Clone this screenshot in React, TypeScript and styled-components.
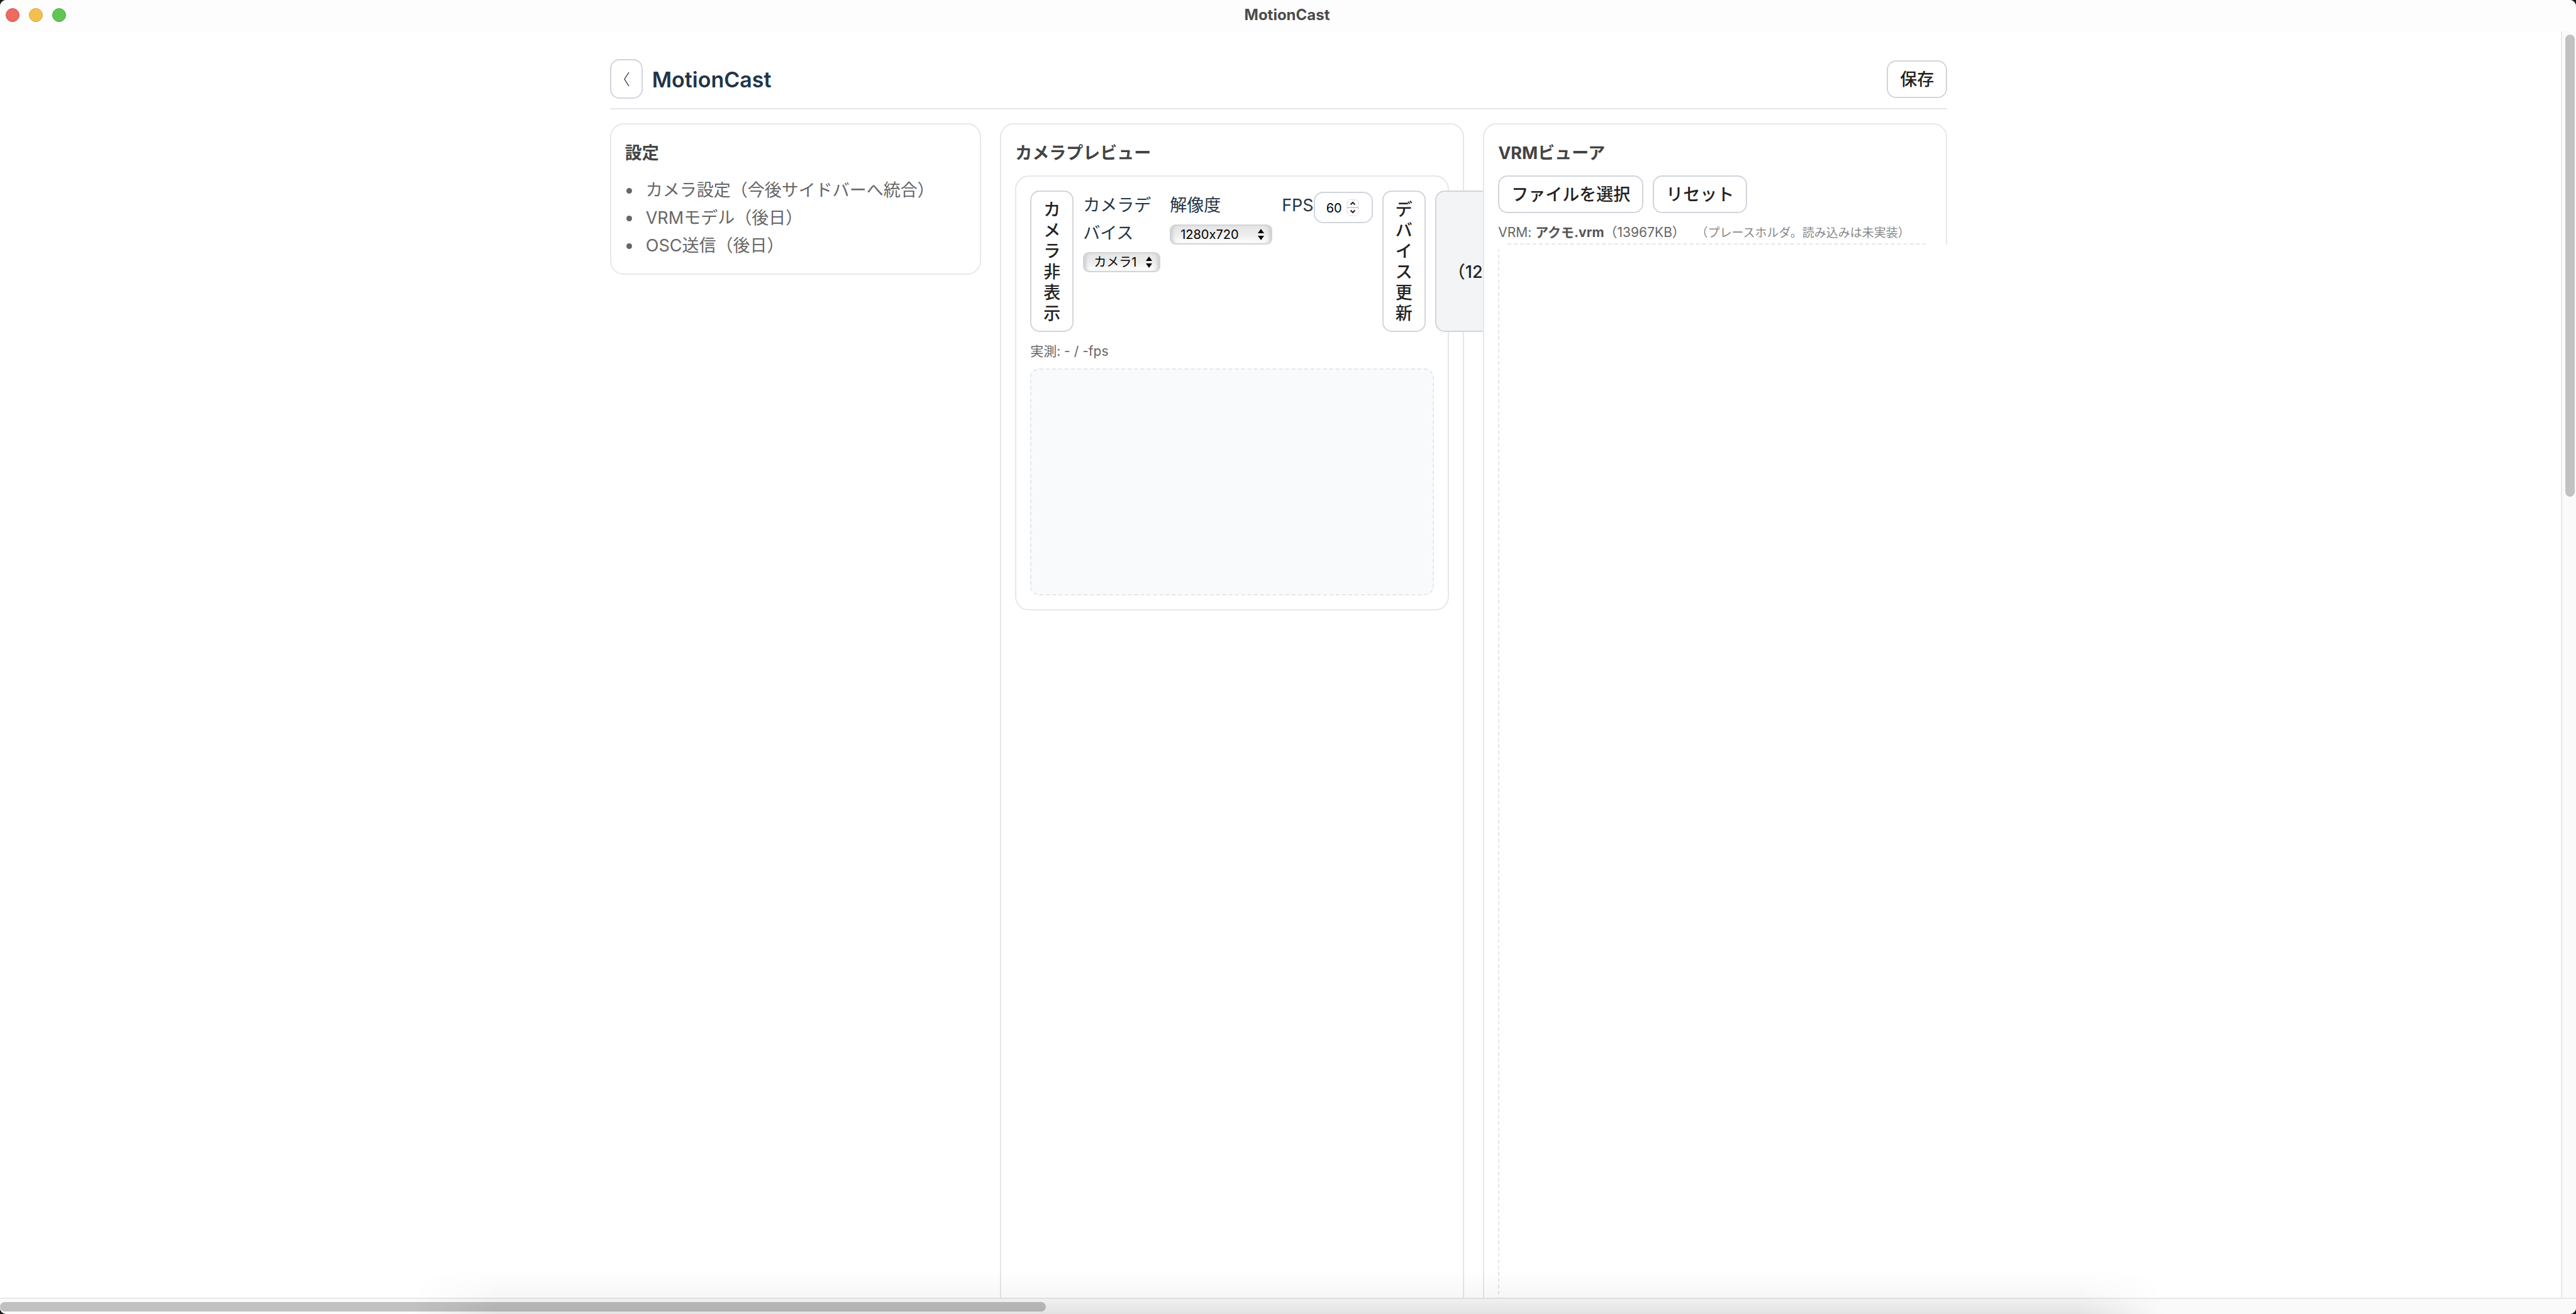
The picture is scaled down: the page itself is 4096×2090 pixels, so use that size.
import React from "react";
import styled, { createGlobalStyle } from "styled-components";

const GlobalStyle = createGlobalStyle`
  *, *::before, *::after { box-sizing: border-box; }
  body {
    margin: 0;
    background: #1b1b1b;
    color: #213547;
    font-family: Inter, "Noto Sans CJK JP", sans-serif;
    font-size: 27px;
    line-height: 44px;
    font-feature-settings: "calt" 0;
  }
  button, input, select {
    font-family: inherit;
    font-feature-settings: inherit;
    margin: 0;
  }
`;

const Window = styled.div`
  display: grid;
  grid-template-rows: 50px minmax(0, 1fr) 26px;
  grid-template-columns: minmax(0, 1fr) 24px;
  height: 100vh;
  overflow: hidden;
  background: #fff;
  border-radius: 10px;
  position: relative;
`;

const TitleBar = styled.header`
  grid-column: 1 / -1;
  display: grid;
  grid-template-columns: 1fr auto 1fr;
  align-items: center;
  padding: 0 12px 2px 9px;
  background: #fdfdfd;
`;

const Lights = styled.div`
  display: flex;
  gap: 15px;
`;

const Light = styled.button<{ $fill: string; $edge: string }>`
  width: 22px;
  height: 22px;
  padding: 0;
  border: 1px solid ${(p) => p.$edge};
  border-radius: 50%;
  background: ${(p) => p.$fill};
`;

const WindowTitle = styled.div`
  font-size: 24px;
  font-weight: 700;
  line-height: 28px;
  color: #4b4b4b;
`;

const Viewport = styled.div`
  overflow: hidden;
  padding-right: 6px;
`;

const Page = styled.main`
  width: 52.3%;
  margin: 0 auto;
  padding-top: 44px;
`;

const PageHeader = styled.div`
  display: flex;
  align-items: center;
  justify-content: space-between;
  padding-bottom: 15px;
  margin-bottom: 22px;
  border-bottom: 2px solid #e5e7eb;
`;

const Brand = styled.div`
  display: flex;
  align-items: center;
  gap: 15px;
`;

const BrandName = styled.h1`
  margin: 0;
  padding-top: 2px;
  font-size: 34px;
  font-weight: 600;
`;

const Button = styled.button<{ $muted?: boolean }>`
  padding: 12px 19px 11px;
  border: 2px solid #d1d5db;
  border-radius: 15px;
  background: ${(p) => (p.$muted ? "#f3f4f6" : "#fff")};
  color: #222;
  font-size: 27px;
  font-weight: 500;
  line-height: 33px;
`;

const BackButton = styled(Button)`
  display: grid;
  place-items: center;
  width: 52px;
  height: 63px;
  padding: 0;
`;

const Columns = styled.div`
  display: grid;
  grid-template-columns: minmax(0, 4fr) minmax(0, 5fr) minmax(0, 5fr);
  gap: 30px;
`;

const Card = styled.section<{ $fit?: boolean }>`
  align-self: ${(p) => (p.$fit ? "start" : "stretch")};
  min-width: 0;
  padding: 22px;
  border: 2px solid #e5e7eb;
  border-radius: 22px;
  background: #fff;
`;

const FrontCard = styled(Card)`
  position: relative;
  z-index: 1;
`;

const CardTitle = styled.h2`
  margin: 0 0 13px;
  padding-top: 2px;
  font-size: 27px;
  font-weight: 700;
  color: #444;
`;

const TodoList = styled.ul`
  margin: 0;
  padding: 2px 0 0;
  list-style: none;
  color: #666;

  li {
    display: flex;
    align-items: center;
  }

  li::before {
    content: "";
    width: 9px;
    height: 9px;
    margin: 0 22px 0 2px;
    border-radius: 50%;
    background: #666;
  }
`;

const Controls = styled.div`
  display: flex;
  gap: 15px;
`;

const Field = styled.label<{ $inline?: boolean }>`
  display: flex;
  flex-direction: ${(p) => (p.$inline ? "row" : "column")};
  align-items: flex-start;
  padding-top: 2px;
`;

const SelectBox = styled.span`
  position: relative;
  display: block;
  margin-top: 8px;
  height: 32px;

  svg {
    position: absolute;
    right: 13px;
    top: 6px;
    pointer-events: none;
  }
`;

const Select = styled.select<{ $room: number }>`
  appearance: none;
  display: block;
  height: 32px;
  padding: 0 ${(p) => p.$room}px 0 15px;
  border: 2px solid #d1d5db;
  border-radius: 9px;
  background: linear-gradient(#e6e6e6, #ededed 50%, #fff);
  box-shadow: inset 6px 0 6px -4px #c4c4c4, inset -6px 0 6px -4px #c4c4c4;
  color: #000;
  font-size: 20px;
  line-height: 28px;
`;

const NumberBox = styled.span`
  position: relative;
  display: block;

  svg {
    position: absolute;
    right: 22px;
    top: 11px;
    pointer-events: none;
  }
`;

const NumberInput = styled.input`
  appearance: textfield;
  display: block;
  width: 94px;
  height: 50px;
  padding: 1px 18px 0;
  border: 2px solid #d1d5db;
  border-radius: 15px;
  background: #fff;
  color: #000;
  font-size: 20px;

  &::-webkit-inner-spin-button { appearance: none; margin: 0; }
`;

const Status = styled.div`
  margin-top: 14px;
  font-size: 21px;
  line-height: 33px;
  color: #666;
  white-space: nowrap;
`;

const FileName = styled.strong`
  font-weight: 700;
  color: #555;
`;

const Note = styled.span`
  margin-left: 26px;
  font-size: 19px;
  color: #888;
`;

const Preview = styled.div`
  margin-top: 11px;
  aspect-ratio: 16 / 9;
  border: 2px dashed #e5e7eb;
  border-radius: 15px;
  background: #f9fafc;
`;

const Stage = styled.div`
  border: 2px dashed #e5e7eb;
  border-radius: 15px;
`;

const StageCanvas = styled.canvas`
  display: block;
  width: calc(100% + 40px);
  height: 100vh;
  background: #fff;
`;

const Track = styled.div<{ $axis: "x" | "y" }>`
  background: #fafafa;
  border: 0 solid #e8e8e8;
  border-width: ${(p) => (p.$axis === "x" ? "2px 0 0 0" : "0 0 0 2px")};
  padding: ${(p) => (p.$axis === "x" ? "5px 0 0 0" : "5px 0 0 5px")};
  grid-column: ${(p) => (p.$axis === "x" ? "1 / -1" : "auto")};
`;

const Thumb = styled.div<{ $axis: "x" | "y" }>`
  width: ${(p) => (p.$axis === "x" ? "40.6%" : "15px")};
  height: ${(p) => (p.$axis === "x" ? "15px" : "36.6%")};
  border-radius: 8px;
  background: #c1c1c1;
`;

const DockShadow = styled.div`
  position: absolute;
  z-index: 2;
  left: 16%;
  right: 16%;
  bottom: 0;
  height: 70px;
  pointer-events: none;
  background: linear-gradient(transparent, rgba(0, 0, 0, 0.03) 60%, rgba(0, 0, 0, 0.09));
  mask-image: linear-gradient(90deg, transparent, #000 5%, #000 95%, transparent);
`;

const SelectArrows = () => (
  <svg width="10" height="20" viewBox="0 0 10 20" aria-hidden="true">
    <path d="M5 1 10 8H0zM5 19 10 12H0z" fill="#000" />
  </svg>
);

const Stepper = () => (
  <svg width="20" height="28" viewBox="0 0 20 28" aria-hidden="true">
    <rect x="1" y="1" width="18" height="26" rx="6" fill="#fff" stroke="#dedede" />
    <path d="M1 14H19" stroke="#cfcfcf" strokeWidth="2" />
    <path d="M6.500 9.500 10 6 13.500 9.500M6.500 18.500 10 22 13.500 18.500" fill="none" stroke="#222" strokeWidth="2" />
  </svg>
);

export default function App() {
  return (
    <>
      <GlobalStyle />
      <Window>
        <TitleBar>
          <Lights>
            <Light $fill="#ec6a5e" $edge="#d5544a" aria-label="閉じる" />
            <Light $fill="#f4bf4f" $edge="#d9a13b" aria-label="しまう" />
            <Light $fill="#61c554" $edge="#4fab42" aria-label="拡大" />
          </Lights>
          <WindowTitle>MotionCast</WindowTitle>
        </TitleBar>

        <Viewport>
          <Page>
            <PageHeader>
              <Brand>
                <BackButton aria-label="戻る">
                  <svg width="10" height="24" viewBox="0 0 10 24" aria-hidden="true">
                    <path d="M9 1 2 12 9 23" fill="none" stroke="#222" strokeWidth="1.200" />
                  </svg>
                </BackButton>
                <BrandName>MotionCast</BrandName>
              </Brand>
              <Button>保存</Button>
            </PageHeader>

            <Columns>
              <Card $fit>
                <CardTitle>設定</CardTitle>
                <TodoList>
                  <li>カメラ設定（今後サイドバーへ統合）</li>
                  <li>VRMモデル（後日）</li>
                  <li>OSC送信（後日）</li>
                </TodoList>
              </Card>

              <Card>
                <CardTitle>カメラプレビュー</CardTitle>
                <Card as="div">
                  <Controls>
                    <Button>カメラ非表示</Button>
                    <Field>
                      カメラデバイス
                      <SelectBox>
                        <Select $room={35} defaultValue="1">
                          <option value="1">カメラ1</option>
                        </Select>
                        <SelectArrows />
                      </SelectBox>
                    </Field>
                    <Field>
                      解像度
                      <SelectBox>
                        <Select $room={41} defaultValue="1280x720">
                          <option>640x480</option>
                          <option>1280x720</option>
                          <option>1920x1080</option>
                        </Select>
                        <SelectArrows />
                      </SelectBox>
                    </Field>
                    <Field $inline>
                      FPS
                      <NumberBox>
                        <NumberInput type="number" defaultValue={60} />
                        <Stepper />
                      </NumberBox>
                    </Field>
                    <Button>デバイス更新</Button>
                    <Button $muted>適用（1280x720）</Button>
                  </Controls>
                  <Status>実測: - / -fps</Status>
                  <Preview />
                </Card>
              </Card>

              <FrontCard>
                <CardTitle>VRMビューア</CardTitle>
                <Controls>
                  <Button>ファイルを選択</Button>
                  <Button>リセット</Button>
                </Controls>
                <Status>
                  VRM: <FileName>アクモ.vrm</FileName>（13967KB）
                  <Note>（プレースホルダ。読み込みは未実装）</Note>
                </Status>
                <Stage>
                  <StageCanvas />
                </Stage>
              </FrontCard>
            </Columns>
          </Page>
        </Viewport>

        <Track $axis="y">
          <Thumb $axis="y" />
        </Track>
        <Track $axis="x">
          <Thumb $axis="x" />
        </Track>
        <DockShadow />
      </Window>
    </>
  );
}
